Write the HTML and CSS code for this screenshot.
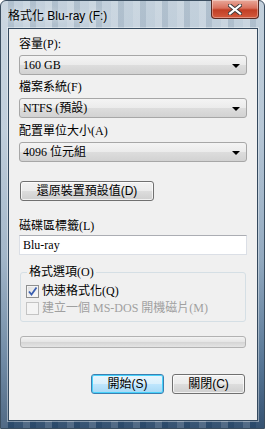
FILE: index.html
```html
<!DOCTYPE html>
<html lang="zh-Hant">
<head>
  <meta charset="UTF-8" />
  <title>格式化 Blu-ray (F:)</title>
  <link rel="stylesheet" href="styles.css">
</head>
<body>
  <div class="window">
    <div class="titlebar">
      <span class="title">格式化 Blu-ray (F:)</span>
      <span class="close">
        <svg width="14" height="11" viewBox="0 0 14 11">
          <path d="M2 1.5 L12 9.5 M12 1.5 L2 9.5" stroke="#3a3a3a" stroke-width="4" stroke-linecap="square" fill="none"/>
          <path d="M2 1.5 L12 9.5 M12 1.5 L2 9.5" stroke="#ffffff" stroke-width="2.2" stroke-linecap="square" fill="none"/>
        </svg>
      </span>
    </div>

    <div class="client">
      <div class="field">
        <div class="label">容量(P):</div>
        <div class="combo"><span>160 GB</span><i class="arrow"></i></div>
      </div>
      <div class="field">
        <div class="label">檔案系統(F)</div>
        <div class="combo"><span>NTFS (預設)</span><i class="arrow"></i></div>
      </div>
      <div class="field field-last">
        <div class="label">配置單位大小(A)</div>
        <div class="combo"><span>4096 位元組</span><i class="arrow"></i></div>
      </div>

      <div class="btn btn-reset">還原裝置預設值(D)</div>

      <div class="field field-volume">
        <div class="label">磁碟區標籤(L)</div>
        <div class="textbox">Blu-ray</div>
      </div>

      <fieldset class="group">
        <legend>格式選項(O)</legend>
        <div class="check-row">
          <span class="check checked">
            <svg width="11" height="11" viewBox="0 0 11 11">
              <path d="M2 5.5 L4.5 8.5 L9.5 1.5" stroke="#3a5fb0" stroke-width="1.8" fill="none"/>
            </svg>
          </span>
          <span>快速格式化(Q)</span>
        </div>
        <div class="check-row disabled">
          <span class="check"></span>
          <span>建立一個 MS-DOS 開機磁片(M)</span>
        </div>
      </fieldset>

      <div class="progress"></div>

      <div class="actions">
        <div class="btn btn-default">開始(S)</div>
        <div class="btn">關閉(C)</div>
      </div>
    </div>
  </div>
</body>
</html>
```

FILE: styles.css
```css
body {
  margin: 0;
  width: 265px;
  height: 429px;
  overflow: hidden;
  font-family: "Liberation Serif", "Noto Sans CJK TC", serif;
  font-size: 12px;
  color: #000;
}
.window {
  width: 265px;
  height: 429px;
  box-sizing: border-box;
  padding: 0 6px 7px 7px;
  display: flex;
  flex-direction: column;
  background:
    repeating-linear-gradient(90deg, rgba(255,255,255,0.18) 0 7px, rgba(40,70,100,0.10) 7px 13px, rgba(255,255,255,0.05) 13px 22px),
    linear-gradient(#c0ceda, #b3c4d4 30%, #8ea6bd 60%, #4e6f90 85%, #2b496a);
  border: 1px solid #3b4e60;
  border-radius: 6px 6px 0 0;
}
.titlebar {
  height: 27px;
  display: flex;
  justify-content: space-between;
  align-items: flex-start;
}
.title {
  font-family: "Liberation Sans", "Noto Sans CJK TC", sans-serif;
  font-size: 12px;
  line-height: 16px;
  margin-top: 7px;
  text-shadow: 0 0 6px rgba(255,255,255,0.9);
}
.close {
  width: 46px;
  height: 18px;
  margin-top: -1px;
  margin-right: -1px;
  display: flex;
  align-items: center;
  justify-content: center;
  border: 1px solid #5a2a22;
  border-top: none;
  border-radius: 0 0 4px 4px;
  background: linear-gradient(#e9a99a, #d9715d 45%, #c13f25 55%, #d45a3d);
  box-shadow: inset 0 0 0 1px rgba(255,255,255,0.35);
}
.client {
  flex: 1;
  background: #f0f0f0;
  border: 1px solid #34495e;
  box-shadow: 0 0 0 1px rgba(255,255,255,0.4);
  padding: 7px 10px 0 10px;
  display: flex;
  flex-direction: column;
}
.field + .field {
  margin-top: 4px;
}
.field-last {
  margin-top: 5px !important;
}
.label {
  line-height: 16px;
  height: 16px;
  margin-bottom: 3px;
}
.combo {
  height: 18px;
  border: 1px solid #a7a7a7;
  border-radius: 3px;
  background: linear-gradient(#f4f4f4, #ebebeb 50%, #dddddd 51%, #d2d2d2);
  display: flex;
  align-items: center;
  justify-content: space-between;
  padding: 0 6px 0 3px;
  line-height: 16px;
}
.arrow {
  width: 0;
  height: 0;
  border-left: 4px solid transparent;
  border-right: 4px solid transparent;
  border-top: 4px solid #000;
  margin-top: 2px;
}
.btn {
  height: 18px;
  border: 1px solid #707070;
  border-radius: 3px;
  background: linear-gradient(#f2f2f2, #ebebeb 50%, #dddddd 51%, #cfcfcf);
  box-shadow: inset 0 0 0 1px rgba(255,255,255,0.7);
  font-family: "Liberation Sans", "Noto Sans CJK TC", sans-serif;
  display: flex;
  align-items: center;
  justify-content: center;
  line-height: 16px;
}
.btn-reset {
  width: 132px;
  margin: 19px 0 0 1px;
}
.field-volume {
  margin-top: 17px;
}
.field-volume .label {
  margin-bottom: 1px;
}
.textbox {
  height: 18px;
  border: 1px solid #dbdfe6;
  border-top-color: #abadb3;
  background: #fff;
  padding: 0 3px;
  line-height: 18px;
}
.group {
  margin: 9px 1px 0 1px;
  padding: 0 5px 4px 5px;
  border: 1px solid #d5dfe5;
  border-radius: 3px;
}
.group legend {
  padding: 0 2px;
  margin-left: 1px;
  line-height: 16px;
}
.check-row {
  display: flex;
  align-items: center;
  gap: 3px;
  height: 17px;
  line-height: 17px;
}
.check-row:first-of-type {
  margin-top: 3px;
}
.check {
  width: 11px;
  height: 11px;
  border: 1px solid #8e8f8f;
  background: linear-gradient(135deg, #dcdcdc, #fdfdfd);
  box-shadow: inset 0 0 0 1px #f4f4f4;
  display: flex;
}
.disabled {
  color: #a0a0a0;
}
.disabled .check {
  border-color: #c4c4c4;
  background: #f4f4f4;
  box-shadow: none;
}
.progress {
  margin: 14px 1px 0 1px;
  height: 10px;
  border: 1px solid #b2b2b2;
  border-radius: 3px;
  background: linear-gradient(#f3f3f3, #e6e6e6 45%, #d6d6d6 55%, #e4e4e4);
}
.actions {
  margin-top: 26px;
  display: flex;
  justify-content: flex-end;
  gap: 8px;
  padding-right: 2px;
}
.actions .btn {
  width: 71px;
}
.btn-default {
  border-color: #3c7fb1;
  background: linear-gradient(#eaf6fd, #d9f0fc 50%, #bee6fd 51%, #a7d9f5);
  box-shadow: inset 0 0 0 1px #48d2fb;
}
```
